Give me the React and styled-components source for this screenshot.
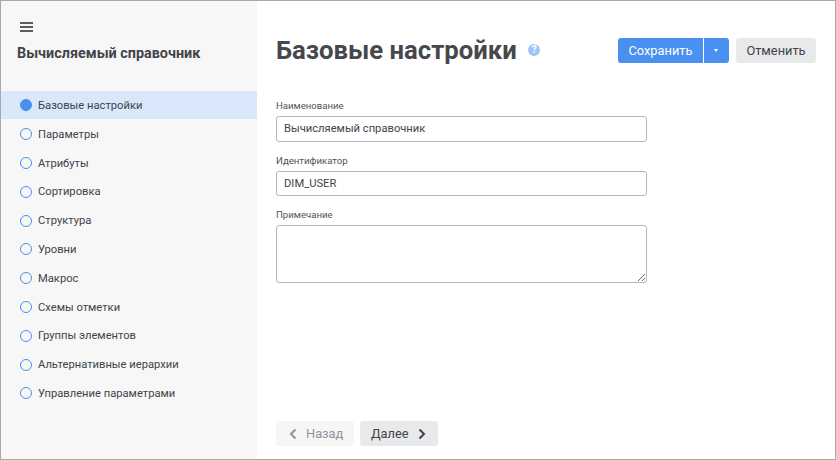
import React from 'react';
import styled, { createGlobalStyle } from 'styled-components';

const GlobalStyle = createGlobalStyle`
  html, body {
    margin: 0;
    padding: 0;
    background: #fff;
  }
  * {
    box-sizing: border-box;
  }
`;

const Frame = styled.div`
  width: 836px;
  height: 460px;
  display: flex;
  border: 1px solid #a9a9a9;
  font-family: Roboto, 'Liberation Sans', sans-serif;
  color: #40444a;
  overflow: hidden;
`;

const Sidebar = styled.aside`
  width: 256px;
  flex: none;
  background: #f7f7f7;
  display: flex;
  flex-direction: column;
`;

const MenuButton = styled.div`
  margin: 19px 0 0 19px;
  width: 13px;
  height: 14px;
  display: flex;
  flex-direction: column;
  justify-content: center;
  gap: 2px;
  span {
    display: block;
    height: 2px;
    background: #5a5e63;
  }
`;

const SidebarTitle = styled.h2`
  margin: 10px 0 0 16px;
  font-size: 14.4px;
  line-height: 20px;
  font-weight: 700;
  color: #40444a;
`;

const NavList = styled.nav`
  margin-top: 26.6px;
  display: flex;
  flex-direction: column;
`;

const NavItem = styled.div`
  height: 28.8px;
  display: flex;
  align-items: center;
  gap: 6px;
  padding: 1px 0 0 19px;
  font-size: 11.2px;
  background: ${(p) => (p.$active ? '#d9e7fa' : 'transparent')};
`;

const Dot = styled.span`
  width: 12px;
  height: 12px;
  border-radius: 50%;
  border: 1px solid #4a90f0;
  background: ${(p) => (p.$active ? '#4a90f0' : 'transparent')};
  flex: none;
`;

const Main = styled.main`
  flex: 1;
  display: flex;
  flex-direction: column;
  padding: 37px 19px 13px 19px;
`;

const Header = styled.header`
  display: flex;
  align-items: center;
  height: 25px;
`;

const Title = styled.h1`
  margin: 0;
  font-size: 25.7px;
  line-height: 25px;
  font-weight: 700;
  color: #45484d;
`;

const Help = styled.span`
  width: 12px;
  height: 12px;
  margin: 0 0 1px 11.5px;
  border-radius: 50%;
  background: #9cc6f7;
  color: #fff;
  font-size: 10px;
  font-weight: 700;
  line-height: 12px;
  text-align: center;
`;

const Actions = styled.div`
  margin-left: auto;
  display: flex;
  align-items: center;
  gap: 7px;
`;

const SplitButton = styled.div`
  display: flex;
  gap: 1px;
`;

const Button = styled.button`
  height: 25px;
  border: 0;
  margin: 0;
  padding: 0 10.5px;
  display: flex;
  align-items: center;
  font-family: inherit;
  font-size: 12.8px;
  border-radius: ${(p) => p.$radius || '3px'};
  background: ${(p) => (p.$primary ? '#4a90f0' : '#e8e9eb')};
  color: ${(p) => (p.$primary ? '#fff' : '#40444a')};
`;

const StepButton = styled(Button)`
  width: 78px;
  padding: 0 0 0 ${(p) => (p.$muted ? 13 : 11)}px;
  gap: 9px;
  background: ${(p) => (p.$muted ? '#f6f6f7' : '#e8e9eb')};
  color: ${(p) => (p.$muted ? '#8f959c' : '#40444a')};
`;

const Caret = styled.span`
  width: 0;
  height: 0;
  border-left: 2.5px solid transparent;
  border-right: 2.5px solid transparent;
  border-top: 3px solid #fff;
`;

const Form = styled.form`
  margin-top: 36px;
  width: 371px;
  display: flex;
  flex-direction: column;
`;

const Label = styled.label`
  font-size: 9.6px;
  line-height: 14px;
  height: 14px;
  color: #50545a;
  margin-bottom: 3px;
`;

const Input = styled.input`
  height: 25.6px;
  padding: 0 7px;
  margin-bottom: 12px;
  border: 1px solid #b4b7bc;
  border-radius: 3px;
  background: #fff;
  font-family: inherit;
  font-size: 11.2px;
  color: #40444a;
  outline: none;
`;

const Textarea = styled.textarea`
  height: 58px;
  padding: 4px 7px;
  border: 1px solid #b4b7bc;
  border-radius: 3px;
  background: #fff;
  font-family: inherit;
  font-size: 11.2px;
  outline: none;
`;

const Footer = styled.footer`
  margin-top: auto;
  display: flex;
  gap: 6px;
`;

const Chevron = ({ left, color }) => (
  <svg width="8" height="12" viewBox="0 0 8 12" fill="none" stroke={color} strokeWidth="2">
    <path d={left ? 'M6.5 1.5L2 6l4.5 4.5' : 'M1.5 1.5L6 6l-4.5 4.5'} />
  </svg>
);

const items = [
  'Базовые настройки',
  'Параметры',
  'Атрибуты',
  'Сортировка',
  'Структура',
  'Уровни',
  'Макрос',
  'Схемы отметки',
  'Группы элементов',
  'Альтернативные иерархии',
  'Управление параметрами',
];

const App = () => (
  <>
    <GlobalStyle />
    <Frame>
      <Sidebar>
        <MenuButton>
          <span />
          <span />
          <span />
        </MenuButton>
        <SidebarTitle>Вычисляемый справочник</SidebarTitle>
        <NavList>
          {items.map((item, i) => (
            <NavItem key={item} $active={i === 0}>
              <Dot $active={i === 0} />
              {item}
            </NavItem>
          ))}
        </NavList>
      </Sidebar>
      <Main>
        <Header>
          <Title>Базовые настройки</Title>
          <Help>?</Help>
          <Actions>
            <SplitButton>
              <Button $primary $radius="3px 0 0 3px">Сохранить</Button>
              <Button $primary $radius="0 3px 3px 0" aria-label="Ещё">
                <Caret />
              </Button>
            </SplitButton>
            <Button>Отменить</Button>
          </Actions>
        </Header>
        <Form>
          <Label>Наименование</Label>
          <Input defaultValue="Вычисляемый справочник" />
          <Label>Идентификатор</Label>
          <Input defaultValue="DIM_USER" />
          <Label>Примечание</Label>
          <Textarea />
        </Form>
        <Footer>
          <StepButton $muted>
            <Chevron left color="#8f959c" />
            Назад
          </StepButton>
          <StepButton>
            Далее
            <Chevron color="#40444a" />
          </StepButton>
        </Footer>
      </Main>
    </Frame>
  </>
);

export default App;
